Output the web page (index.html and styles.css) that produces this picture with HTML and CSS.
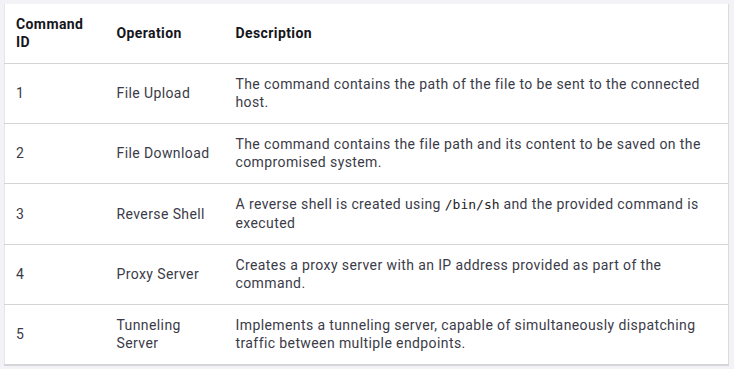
FILE: index.html
```html
<!DOCTYPE html>
<html lang="en">
<head>
  <meta charset="UTF-8" />
  <meta name="viewport" content="width=device-width, initial-scale=1.0"/>
  <title>Command Table</title>
  <link rel="stylesheet" href="styles.css">
</head>
<body>

<table class="cmd-table">
  <colgroup>
    <col class="col-id">
    <col class="col-op">
    <col>
  </colgroup>
  <thead>
    <tr>
      <th>Command ID</th>
      <th>Operation</th>
      <th>Description</th>
    </tr>
  </thead>
  <tbody>
    <tr>
      <td>1</td>
      <td>File Upload</td>
      <td>The command contains the path of the file to be sent to the connected host.</td>
    </tr>
    <tr>
      <td>2</td>
      <td>File Download</td>
      <td>The command contains the file path and its content to be saved on the compromised system.</td>
    </tr>
    <tr>
      <td>3</td>
      <td>Reverse Shell</td>
      <td>A reverse shell is created using <code>/bin/sh</code> and the provided command is executed</td>
    </tr>
    <tr>
      <td>4</td>
      <td>Proxy Server</td>
      <td>Creates a proxy server with an IP address provided as part of the command.</td>
    </tr>
    <tr>
      <td>5</td>
      <td>Tunneling Server</td>
      <td>Implements a tunneling server, capable of simultaneously dispatching traffic between multiple endpoints.</td>
    </tr>
  </tbody>
</table>

</body>
</html>
```

FILE: styles.css
```css
body {
  margin: 0;
  padding: 4px 5px 0 4px;
  background: #f3f3f7;
  font-family: 'Roboto', 'Liberation Sans', sans-serif;
  font-size: 14px;
  line-height: 18px;
  letter-spacing: 0.4px;
  color: #3b3b48;
}

.cmd-table {
  width: 725px;
  table-layout: fixed;
  border-collapse: collapse;
  background: #fff;
  border-left: 1px solid #e6e6ea;
  border-right: 1px solid #dcdce0;
  border-bottom: 2px solid #d6d6da;
}

.col-id {
  width: 101px;
}

.col-op {
  width: 119px;
}

.cmd-table th,
.cmd-table td {
  text-align: left;
  vertical-align: middle;
  padding: 11px 14px 12px 11px;
  border-top: 1px solid #d4d4d8;
}

.cmd-table th {
  color: #15151c;
  font-weight: 700;
  border-top: none;
  padding-bottom: 12px;
}

.cmd-table th:first-child,
.cmd-table td:first-child {
  padding-right: 11px;
}

.cmd-table td:nth-child(2) {
  padding-right: 8px;
}

.cmd-table code {
  font-family: 'DejaVu Sans Mono', 'Liberation Mono', monospace;
  font-size: 13px;
  letter-spacing: 0;
  color: #222;
}
```
